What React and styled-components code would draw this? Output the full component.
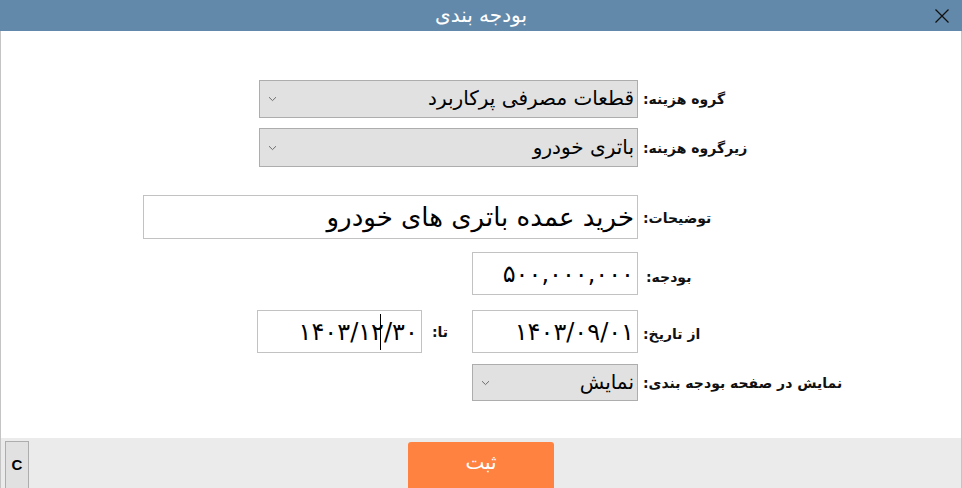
import React from "react";
import styled, { createGlobalStyle } from "styled-components";

const Global = createGlobalStyle`
  html, body { margin: 0; padding: 0; }
  body { width: 962px; height: 488px; overflow: hidden; font-family: "DejaVu Sans", "Noto Sans", sans-serif; }
`;

const Window = styled.div`
  width: 962px;
  height: 488px;
  display: flex;
  flex-direction: column;
  overflow: hidden;
`;

const TitleBar = styled.div`
  height: 31px;
  flex: none;
  background: #6389aa;
  display: grid;
  grid-template-columns: 1fr auto 1fr;
  align-items: center;
`;

const Title = styled.div`
  grid-column: 2;
  color: #ffffff;
  font-size: 20px;
  direction: rtl;
  margin-top: -2px;
`;

const CloseBox = styled.div`
  grid-column: 3;
  justify-self: end;
  display: flex;
  align-items: center;
  justify-content: center;
  width: 40px;
  height: 31px;
`;

const Body = styled.div`
  flex: 1;
  background: #ffffff;
  border-left: 1px solid #c4c4c4;
  border-right: 1px solid #c4c4c4;
  padding-top: 49px;
  display: flex;
  flex-direction: column;
`;

const Row = styled.div`
  display: flex;
  align-items: center;
  margin-top: ${(p) => p.$top || 0}px;
`;

const Fields = styled.div`
  width: 637px;
  flex: none;
  display: flex;
  justify-content: flex-end;
  align-items: center;
`;

const Label = styled.div`
  direction: rtl;
  margin-left: ${(p) => p.$gap ?? 5}px;
  margin-top: ${(p) => p.$dy || 0}px;
  font-weight: bold;
  font-size: 14px;
  color: #111;
  white-space: nowrap;
`;

const InlineLabel = styled(Label)`
  margin: 0 24px 0 10px;
`;

const Select = styled.div`
  position: relative;
  box-sizing: border-box;
  width: ${(p) => p.$w}px;
  height: ${(p) => p.$h}px;
  background: #e1e1e1;
  border: 1px solid #adadad;
  display: flex;
  align-items: center;
  justify-content: space-between;
  padding: 0 3px 0 8px;
`;

const SelectText = styled.span`
  direction: rtl;
  font-size: 20px;
  color: #000;
  order: 2;
  margin-top: -2px;
`;

const Chevron = styled.svg`
  order: 1;
  flex: none;
`;

const TextBox = styled.div`
  position: relative;
  box-sizing: border-box;
  width: ${(p) => p.$w}px;
  height: ${(p) => p.$h}px;
  background: #fff;
  border: 1px solid #c2c2c2;
  display: flex;
  align-items: center;
  justify-content: flex-start;
  padding: 0 3px;
  direction: rtl;
  font-size: ${(p) => p.$fs || 20}px;
  color: #000;
  white-space: nowrap;
`;

const Digits = styled.span`
  direction: ltr;
  unicode-bidi: isolate;
`;

const Caret = styled.span`
  position: absolute;
  left: 122px;
  top: 3px;
  width: 1px;
  height: 36px;
  background: #000;
`;

const Footer = styled.div`
  height: 50px;
  flex: none;
  background: #ebebeb;
  border-left: 1px solid #c4c4c4;
  border-right: 1px solid #c4c4c4;
  display: grid;
  grid-template-columns: 1fr auto 1fr;
  align-items: start;
  overflow: hidden;
`;

const SmallButton = styled.div`
  justify-self: start;
  margin: 3px 0 0 4px;
  box-sizing: border-box;
  width: 24px;
  height: 50px;
  background: #e1e1e1;
  border: 1px solid #adadad;
  display: flex;
  align-items: center;
  justify-content: center;
  padding-bottom: 4px;
  font-family: "Liberation Sans", Arial, sans-serif;
  font-weight: bold;
  font-size: 15px;
  color: #000;
`;

const SaveButton = styled.div`
  grid-column: 2;
  margin-top: 4px;
  width: 146px;
  height: 52px;
  background: #ff8240;
  border-radius: 3px;
  color: #fff;
  font-size: 20px;
  display: flex;
  justify-content: center;
  padding-top: 8px;
  box-sizing: border-box;
  direction: rtl;
`;

function ChevronIcon() {
  return (
    <Chevron width="9" height="6" viewBox="0 0 9 6">
      <path d="M1 1.2 L4.5 4.6 L8 1.2" fill="none" stroke="#6d6d6d" strokeWidth="1" />
    </Chevron>
  );
}

export default function App() {
  return (
    <>
      <Global />
      <Window>
        <TitleBar>
          <Title>بودجه بندی</Title>
          <CloseBox>
            <svg width="16" height="16" viewBox="0 0 16 16">
              <path d="M1.5 1.5 L14.5 14.5 M14.5 1.5 L1.5 14.5" stroke="#111" strokeWidth="1.3" fill="none" />
            </svg>
          </CloseBox>
        </TitleBar>
        <Body>
          <Row>
            <Fields>
              <Select $w={379} $h={38}>
                <SelectText>قطعات مصرفی پرکاربرد</SelectText>
                <ChevronIcon />
              </Select>
            </Fields>
            <Label>گروه هزینه:</Label>
          </Row>
          <Row $top={10}>
            <Fields>
              <Select $w={379} $h={39}>
                <SelectText>باتری خودرو</SelectText>
                <ChevronIcon />
              </Select>
            </Fields>
            <Label>زیرگروه هزینه:</Label>
          </Row>
          <Row $top={28}>
            <Fields>
              <TextBox $w={495} $h={44} $fs={26}>خرید عمده باتری های خودرو</TextBox>
            </Fields>
            <Label $dy={2}>توضیحات:</Label>
          </Row>
          <Row $top={13}>
            <Fields>
              <TextBox $w={166} $h={43} $fs={24}>
                <Digits>۵۰۰,۰۰۰,۰۰۰</Digits>
              </TextBox>
            </Fields>
            <Label $gap={8} $dy={6}>بودجه:</Label>
          </Row>
          <Row $top={15}>
            <Fields>
              <TextBox $w={165} $h={43} $fs={24}>
                <Digits>۱۴۰۳/۱۲/۳۰</Digits>
                <Caret />
              </TextBox>
              <InlineLabel>تا:</InlineLabel>
              <TextBox $w={166} $h={43} $fs={24}>
                <Digits>۱۴۰۳/۰۹/۰۱</Digits>
              </TextBox>
            </Fields>
            <Label $dy={4}>از تاریخ:</Label>
          </Row>
          <Row $top={11}>
            <Fields>
              <Select $w={166} $h={37}>
                <SelectText>نمایش</SelectText>
                <ChevronIcon />
              </Select>
            </Fields>
            <Label>نمایش در صفحه بودجه بندی:</Label>
          </Row>
        </Body>
        <Footer>
          <SmallButton>C</SmallButton>
          <SaveButton>ثبت</SaveButton>
        </Footer>
      </Window>
    </>
  );
}
